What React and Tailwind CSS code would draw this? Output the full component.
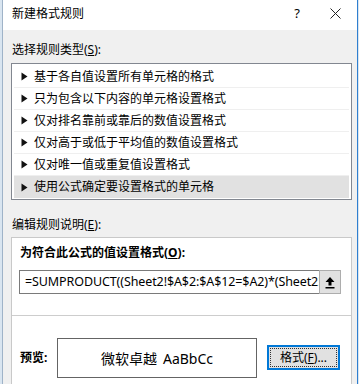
import React from 'react';

const font = "font-['Noto_Sans','Noto_Sans_CJK_SC',sans-serif]";

const rules = [
  '基于各自值设置所有单元格的格式',
  '只为包含以下内容的单元格设置格式',
  '仅对排名靠前或靠后的数值设置格式',
  '仅对高于或低于平均值的数值设置格式',
  '仅对唯一值或重复值设置格式',
  '使用公式确定要设置格式的单元格',
];

function Arrow() {
  return (
    <svg width="7" height="9" viewBox="0 0 7 9" className="shrink-0">
      <path d="M0.5 0.5L6.5 4.5L0.5 8.5Z" fill="#111" />
    </svg>
  );
}

function CollapseIcon() {
  return (
    <svg width="10" height="13" viewBox="0 0 10 13">
      <path d="M5 1L9.5 6H6.5V9.5H3.5V6H0.5Z" fill="#000" />
      <rect x="0.5" y="11" width="9" height="1.5" fill="#000" />
    </svg>
  );
}

export default function App() {
  return (
    <div className={`w-[359px] h-[384px] overflow-hidden bg-[#d9e5f0] flex ${font} text-[12px] text-black`}>
      <div className="ml-[2px] w-[356px] h-full flex flex-col border-l border-[#9fb3c8] border-r border-r-[#2f7fd0]">
        {/* title bar */}
        <div className="h-[30px] shrink-0 bg-white flex items-center pl-[9px]">
          <span className="text-[12px] leading-none pb-[3px]">新建格式规则</span>
          <span className="ml-auto mr-[30px] text-[13px] leading-none pb-[4px]">?</span>
          <svg width="11" height="11" viewBox="0 0 11 11" className="mr-[16px] mb-[4px]">
            <path d="M0.5 0.5L10.5 10.5M10.5 0.5L0.5 10.5" stroke="#222" strokeWidth="1" />
          </svg>
        </div>

        {/* body */}
        <div className="flex-1 bg-[#f0f0f0] pl-[8px] pr-[4px] flex flex-col">
          <div className="h-[16px] mt-[12px] leading-[16px] pl-[1px]">
            选择规则类型(<span className="underline">S</span>):
          </div>
          <div className="mt-[5px] w-[341px] h-[137px] bg-white border border-[#828790] pt-[2px] px-[2px]">
            {rules.map((r, i) => (
              <div
                key={i}
                className={`h-[22px] flex items-center gap-[6px] pl-[7px] border-b border-[#efefef] ${i === rules.length - 1 ? 'bg-[#e1e1e1] border-b-0' : ''}`}
              >
                <Arrow />
                <span className="leading-none">{r}</span>
              </div>
            ))}
          </div>

          <div className="h-[16px] mt-[17px] leading-[16px] pl-[1px]">
            编辑规则说明(<span className="underline">E</span>):
          </div>

          <div className="mt-[4px] w-[341px] flex-1 bg-white border border-[#c9c9c9] border-b-0 flex flex-col">
            <div className="h-[16px] mt-[7px] leading-[16px] pl-[8px] font-bold">
              为符合此公式的值设置格式(<span className="underline">O</span>):
            </div>
            <div className="mt-[9px] ml-[7px] flex h-[24px]">
              <div className="w-[300px] h-full border border-[#7a7a7a] border-r-0 flex items-center pl-[5px] overflow-hidden whitespace-nowrap text-[12.5px] tracking-[-0.1px]">
                =SUMPRODUCT((Sheet2!$A$2:$A$12=$A2)*(Sheet2!$B$2:$B$12)
              </div>
              <div className="w-[22px] h-full bg-[#e1e1e1] border border-[#adadad] flex items-center justify-center">
                <CollapseIcon />
              </div>
            </div>
            <div className="mt-[21px] h-px bg-[#cdcdcd]" />
            <div className="flex items-start mt-[22px]">
              <div className="w-[45px] pl-[8px] mt-[12px] font-bold leading-[16px]">预览:</div>
              <div className="w-[200px] h-[40px] border border-[#646464] flex items-center justify-center text-[14px] gap-[6px]">
                <span>微软卓越</span>
                <span>AaBbCc</span>
              </div>
              <div className="ml-[10px] mt-[7px] w-[73px] h-[25px] bg-[#e1e1e1] border-2 border-[#0078d7] p-[1px]">
                <div className="w-full h-full border border-dotted border-[#333] flex items-center justify-center leading-none">
                  格式(<span className="underline">F</span>)...
                </div>
              </div>
            </div>
          </div>
        </div>
      </div>
    </div>
  );
}
